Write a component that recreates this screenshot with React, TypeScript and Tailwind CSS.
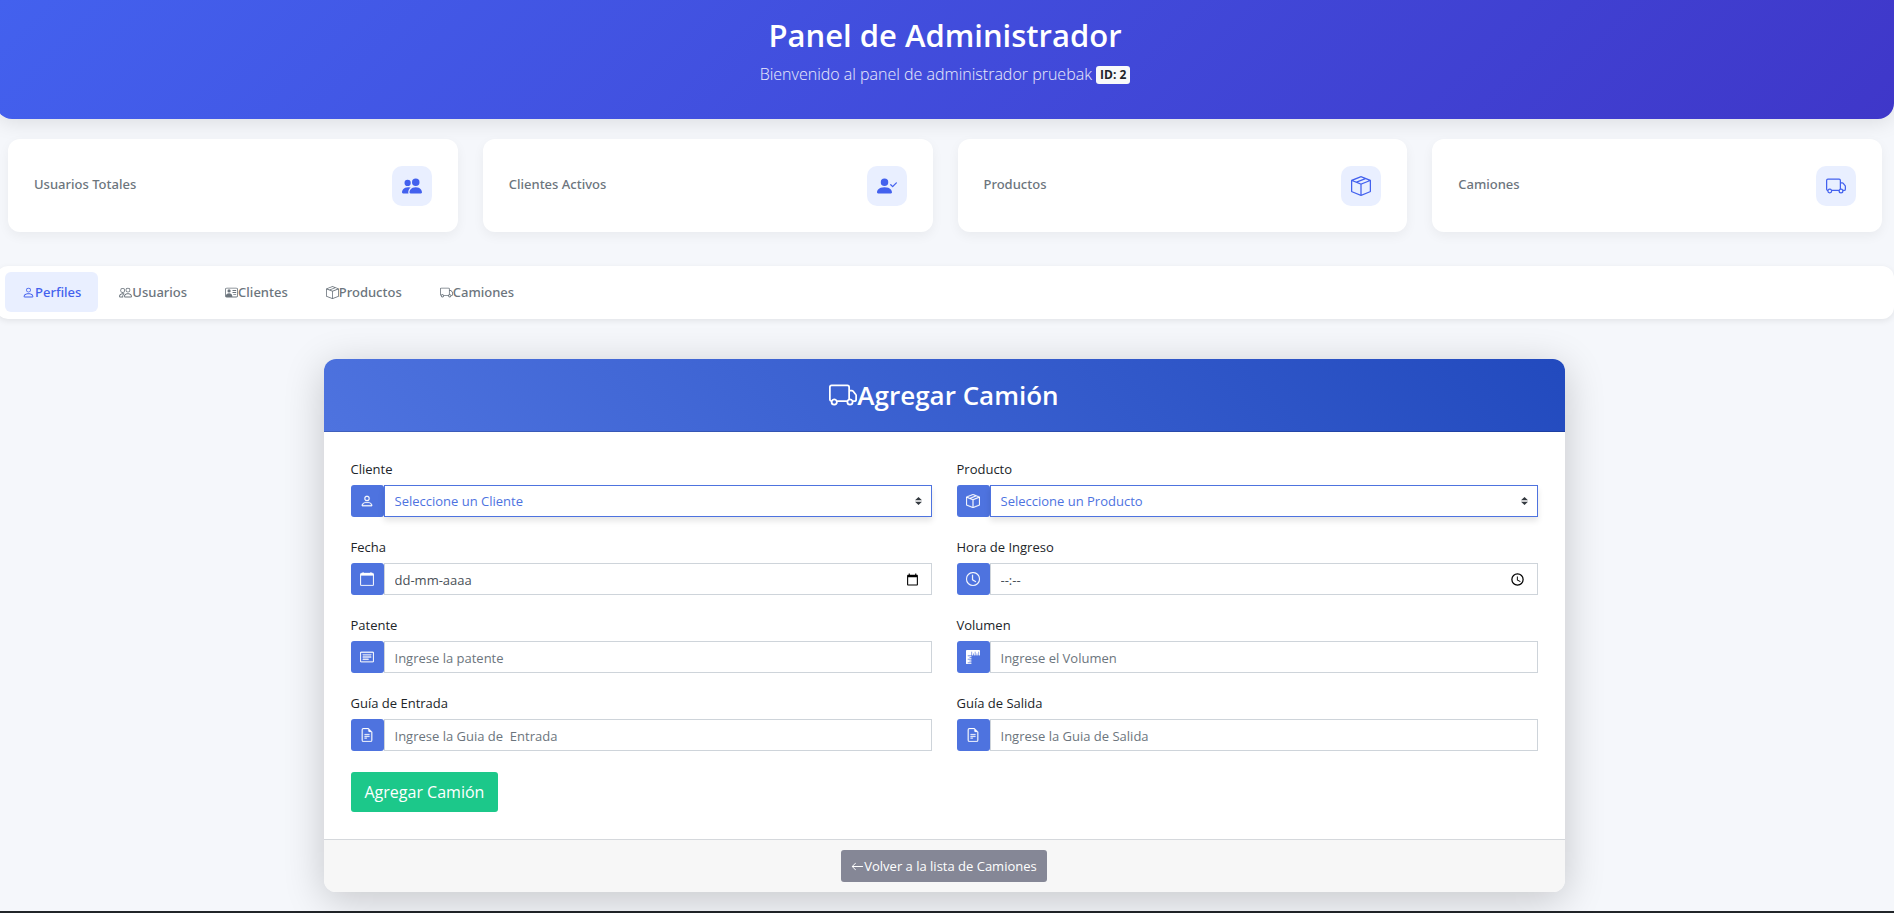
import type { ReactNode } from "react";
import type { IconType } from "react-icons";
import {
  BsArrowLeft, BsBoxSeam, BsCalendar, BsCardText, BsClock, BsFileEarmarkText, BsPeople,
  BsPeopleFill, BsPerson, BsPersonCheckFill, BsPersonVcard, BsRulers, BsTruck,
} from "react-icons/bs";

const stats: { label: string; Icon: IconType }[] = [
  { label: "Usuarios Totales", Icon: BsPeopleFill },
  { label: "Clientes Activos", Icon: BsPersonCheckFill },
  { label: "Productos", Icon: BsBoxSeam },
  { label: "Camiones", Icon: BsTruck },
];

const tabs: { label: string; Icon: IconType; active?: boolean }[] = [
  { label: "Perfiles", Icon: BsPerson, active: true },
  { label: "Usuarios", Icon: BsPeople },
  { label: "Clientes", Icon: BsPersonVcard },
  { label: "Productos", Icon: BsBoxSeam },
  { label: "Camiones", Icon: BsTruck },
];

function Field({ id, label, Icon, children }: { id: string; label: string; Icon: IconType; children: ReactNode }) {
  return (
    <div>
      <label htmlFor={id} className="mb-1.5 block text-[13px] leading-5 text-[#212529]">{label}</label>
      <div className="flex h-8">
        <span className="flex w-[33px] shrink-0 items-center justify-center rounded-[3px] bg-[#4e73df] text-sm text-white">
          <Icon strokeWidth={0.3} />
        </span>
        {children}
      </div>
    </div>
  );
}

function SelectBox({ id, placeholder }: { id: string; placeholder: string }) {
  return (
    <div className="relative flex-1">
      <select id={id} className="h-full w-full appearance-none border border-[#4e73df] bg-white px-2.5 text-[13px] text-[#4e73df] shadow-[0_4px_6px_rgba(0,0,0,0.1)] outline-none">
        <option>{placeholder}</option>
      </select>
      <svg viewBox="0 0 4 5" className="pointer-events-none absolute top-3 right-2.5 h-2 w-[7px] fill-[#343a40]" preserveAspectRatio="none">
        <path d="M2 0L0 2h4zm0 5L0 3h4z" />
      </svg>
    </div>
  );
}

function CalendarGlyph() {
  return (
    <svg viewBox="0 0 24 24" className="size-[13px] fill-black">
      <path d="M20 3h-1V1h-2v2H7V1H5v2H4c-1.1 0-2 .9-2 2v16c0 1.1.9 2 2 2h16c1.1 0 2-.9 2-2V5c0-1.1-.9-2-2-2zm0 18H4V8h16v13z" />
    </svg>
  );
}

function ClockGlyph() {
  return (
    <svg viewBox="0 0 24 24" className="size-[15px] fill-black">
      <path d="M12 2a10 10 0 1 0 0 20 10 10 0 0 0 0-20zm0 18a8 8 0 1 1 0-16 8 8 0 0 1 0 16zm.5-13H11v6l5.2 3.1.8-1.2-4.500-2.700z" />
    </svg>
  );
}

function TextBox({ id, placeholder }: { id: string; placeholder: string }) {
  return (
    <input id={id} type="text" placeholder={placeholder} className="h-full min-w-0 flex-1 border border-[#ced4da] bg-white px-2.5 pt-0.5 text-[13px] text-[#495057] outline-none placeholder:text-[#6c757d]" />
  );
}

function PickerBox({ id, placeholder, action, children }: { id: string; placeholder: string; action: string; children: ReactNode }) {
  return (
    <div className="flex flex-1 items-center border border-[#ced4da] bg-white pr-3">
      <input id={id} type="text" placeholder={placeholder} className="h-full min-w-0 flex-1 px-2.5 pt-0.5 text-[13px] text-[#495057] outline-none placeholder:text-[#495057]" />
      <button type="button" aria-label={action}>{children}</button>
    </div>
  );
}

export default function App() {
  return (
    <div className="min-h-screen overflow-x-hidden bg-[#f5f7fb] font-['Open_Sans','Noto_Sans',sans-serif] text-[13px] leading-5 text-[#212529]">
      <div className="-ml-1">
        <header className="rounded-b-2xl bg-[linear-gradient(135deg,#4361ee,#3f37c9)] pt-[15px] pb-[33px] text-center text-white shadow-[0_4px_20px_rgba(0,0,0,0.1)]">
          <h1 className="text-[31px] leading-10 font-semibold">Panel de Administrador</h1>
          <p className="mt-[7px] text-base leading-6 font-light text-white/90">
            Bienvenido al panel de administrador pruebak{" "}
            <span className="inline-block rounded-[3px] bg-[#f8f9fa] px-1 align-[1px] text-xs leading-[18px] font-bold text-[#212529]">ID: 2</span>
          </p>
        </header>

        <section className="mx-3 mt-5 grid grid-cols-4 gap-[25px]">
          {stats.map(({ label, Icon }) => (
            <div key={label} className="flex items-center justify-between rounded-xl bg-white px-[26px] pt-[27px] pb-[26px] shadow-[0_4px_12px_rgba(0,0,0,0.05)]">
              <h2 className="pb-1 font-['Noto_Sans',sans-serif] font-medium text-[#6c757d]">{label}</h2>
              <span className="flex size-10 items-center justify-center rounded-[10px] bg-[#e9efff] text-xl text-[#4361ee]"><Icon /></span>
            </div>
          ))}
        </section>

        <nav className="mt-[34px] flex gap-1 rounded-xl bg-white pt-1.5 pb-[7px] pl-[9px] font-['Noto_Sans',sans-serif] shadow-[0_2px_6px_rgba(0,0,0,0.08)]">
          {tabs.map(({ label, Icon, active }) => (
            <a key={label} href="#" className={active ? "flex h-10 items-center rounded-md bg-[#e9efff] px-[17px] font-medium text-[#4361ee]" : "flex h-10 items-center rounded-md px-[17px] font-medium text-[#6c757d]"}>
              <Icon />{label}
            </a>
          ))}
        </nav>

        <main className="mt-10 mb-[19px] flex justify-center pr-0.5">
          <section className="w-[1241px] max-w-full overflow-hidden rounded-xl bg-white shadow-[0_8px_40px_rgba(0,0,0,0.2)]">
            <h2 className="flex h-[73px] items-center justify-center border-b border-black/15 bg-[linear-gradient(45deg,#4e73df,#224abe)] text-[26px] font-semibold text-white">
              <BsTruck className="size-7" />Agregar Camión
            </h2>
            <form className="p-[27px]">
              <div className="grid grid-cols-2 gap-x-[25px] gap-y-5">
                <Field id="cliente" label="Cliente" Icon={BsPerson}><SelectBox id="cliente" placeholder="Seleccione un Cliente" /></Field>
                <Field id="producto" label="Producto" Icon={BsBoxSeam}><SelectBox id="producto" placeholder="Seleccione un Producto" /></Field>
                <Field id="fecha" label="Fecha" Icon={BsCalendar}><PickerBox id="fecha" placeholder="dd-mm-aaaa" action="Abrir calendario"><CalendarGlyph /></PickerBox></Field>
                <Field id="hora" label="Hora de Ingreso" Icon={BsClock}><PickerBox id="hora" placeholder="--:--" action="Elegir hora"><ClockGlyph /></PickerBox></Field>
                <Field id="patente" label="Patente" Icon={BsCardText}><TextBox id="patente" placeholder="Ingrese la patente" /></Field>
                <Field id="volumen" label="Volumen" Icon={BsRulers}><TextBox id="volumen" placeholder="Ingrese el Volumen" /></Field>
                <Field id="entrada" label="Guía de Entrada" Icon={BsFileEarmarkText}><TextBox id="entrada" placeholder="Ingrese la Guia de  Entrada" /></Field>
                <Field id="salida" label="Guía de Salida" Icon={BsFileEarmarkText}><TextBox id="salida" placeholder="Ingrese la Guia de Salida" /></Field>
              </div>
              <button type="button" className="mt-[21px] h-10 rounded-[3px] bg-[#1cc88a] px-3.5 text-base text-white">Agregar Camión</button>
            </form>
            <footer className="flex justify-center border-t border-[#d5d8dc] bg-[#f7f7f7] py-2.5">
              <a href="#" className="flex h-8 items-center rounded-[3px] bg-[#858796] px-2.5 text-white"><BsArrowLeft />Volver a la lista de Camiones</a>
            </footer>
          </section>
        </main>
        <footer className="h-0.5 bg-[#212529]" />
      </div>
    </div>
  );
}
